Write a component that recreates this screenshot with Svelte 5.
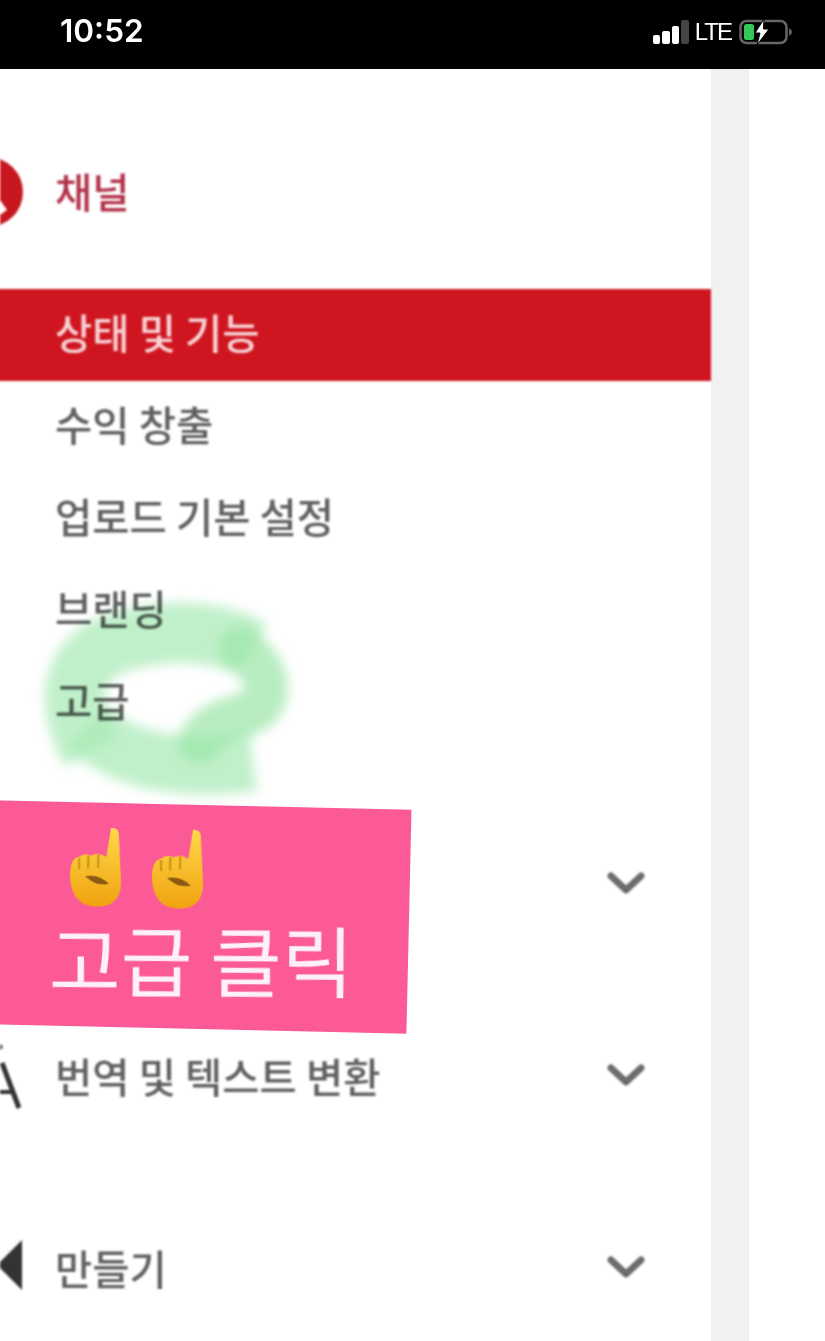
<script>
    const subItems = [
        {label: '상태 및 기능', active: true},
        {label: '수익 창출'},
        {label: '업로드 기본 설정'},
        {label: '브랜딩'},
        {label: '고급'}
    ];
</script>

<div class="screen">
    <header class="status">
        <span class="time">10:52</span>
        <div class="indicators">
            <div class="signal">
                <i class="b1"></i><i class="b2"></i><i class="b3"></i><i class="b4"></i>
            </div>
            <span class="lte">LTE</span>
            <svg class="battery" width="54" height="26" viewBox="0 0 54 26">
                <rect x="1.5" y="2" width="46" height="22" rx="6" fill="none" stroke="#666" stroke-width="2.5"/>
                <rect x="5" y="5" width="10" height="16" rx="2.5" fill="#34c759"/>
                <path d="M25 0 L16 14 H21 L18 26 L30 10 H24.5 Z" fill="#fff" stroke="#000" stroke-width="1"/>
                <path d="M50 9 Q53 11 53 13 Q53 15 50 17 Z" fill="#666"/>
            </svg>
        </div>
    </header>

    <div class="body">
        <nav class="sidebar">
            <div class="head channel">
                <span class="ic">
                    <svg width="56" height="80" viewBox="0 0 56 80">
                        <circle cx="-12" cy="42" r="35" fill="#c8161f"/>
                        <path d="M0 50 L7 60 L0 65 Z" fill="#fff"/>
                    </svg>
                </span>
                <span class="label">채널</span>
            </div>

            {#each subItems as item}
                <div class="sub" class:active={item.active}>{item.label}</div>
            {/each}

            <div class="head first">
                <span class="ic"></span>
                <span class="label"></span>
                <svg class="chev" width="40" height="26" viewBox="0 0 40 26"><path d="M5 6 L20 20 L35 6" /></svg>
            </div>
            <div class="head">
                <span class="ic">
                    <svg width="56" height="80" viewBox="0 0 56 80">
                        <circle cx="0" cy="12" r="2.5" fill="#444"/>
                        <path d="M2 28 L19 73" fill="none" stroke="#333" stroke-width="5"/>
                        <path d="M0 57 H13" stroke="#333" stroke-width="4"/>
                    </svg>
                </span>
                <span class="label">번역 및 텍스트 변환</span>
                <svg class="chev" width="40" height="26" viewBox="0 0 40 26"><path d="M5 6 L20 20 L35 6" /></svg>
            </div>
            <div class="head">
                <span class="ic">
                    <svg width="56" height="80" viewBox="0 0 56 80">
                        <path d="M22 13 V63 L-3 38 Z" fill="#333"/>
                    </svg>
                </span>
                <span class="label">만들기</span>
                <svg class="chev" width="40" height="26" viewBox="0 0 40 26"><path d="M5 6 L20 20 L35 6" /></svg>
            </div>
        </nav>
        <div class="scrollbar"></div>
        <div class="rest"></div>
    </div>

    <svg class="scribble" width="300" height="220" viewBox="0 0 300 220">
        <path d="M238 172 C180 180 110 176 72 136"
              fill="none" stroke="#a8eab6" stroke-width="58" opacity=".72"/>
        <path d="M76 162 C48 110 56 68 104 52 C150 38 205 40 236 60"
              fill="none" stroke="#a8eab6" stroke-width="60" opacity=".72"/>
        <path d="M226 58 C256 80 260 114 232 124 C215 130 195 132 185 152"
              fill="none" stroke="#9be6a9" stroke-width="44" stroke-linecap="round" opacity=".72"/>
    </svg>

    <div class="callout">
        <div class="hands">
            {#each [0, 1] as h}
                <svg width="56" height="82" viewBox="0 0 56 82">
                    <defs>
                        <linearGradient id="skin{h}" x1="0" y1="0" x2="0" y2="1">
                            <stop offset="0" stop-color="#ffd84a"/>
                            <stop offset="1" stop-color="#f0a30f"/>
                        </linearGradient>
                    </defs>
                    <path d="M41 1 Q49 0 49 8 L52 50 Q55 80 28 80 Q3 80 1 50 Q1 32 9 31 Q15 26 22 29 Q29 25 37 30 Z" fill="url(#skin{h})"/>
                    <path d="M10 32 V43 M19 29 V42 M29 28 V41" stroke="#d39a1c" stroke-width="2.5"/>
                    <path d="M16 50 Q30 47 40 57 Q29 59 22 54 Z" fill="#8a5a10"/>
                </svg>
            {/each}
        </div>
        <div class="callout-text">고급 클릭</div>
    </div>
</div>

<style>
    :global(body) {
        margin: 0;
        background: #fff;
    }

    .screen {
        position: relative;
        width: 825px;
        height: 1341px;
        overflow: hidden;
        font-family: "Noto Sans CJK KR", "Noto Sans", sans-serif;
    }

    .status {
        height: 69px;
        background: #000;
        color: #fff;
        display: flex;
        align-items: center;
        justify-content: space-between;
        padding: 0 32px 8px 60px;
        box-sizing: border-box;
    }

    .time {
        font-family: Inter, sans-serif;
        font-size: 31.5px;
        font-weight: 600;
    }

    .indicators {
        display: flex;
        align-items: center;
        gap: 6px;
        margin-top: 3px;
    }

    .signal {
        display: flex;
        align-items: flex-end;
        gap: 2px;
        height: 24px;
    }

    .signal i {
        width: 7.5px;
        background: #fff;
        border-radius: 2px;
    }

    .signal .b1 { height: 9px; }
    .signal .b2 { height: 13px; }
    .signal .b3 { height: 18px; }
    .signal .b4 { height: 24px; background: #444; }

    .lte {
        font-family: "Liberation Sans", sans-serif;
        font-size: 24px;
        letter-spacing: -2px;
        line-height: 24px;
        margin-right: 2px;
    }

    .body {
        display: flex;
        height: 1272px;
    }

    .sidebar {
        width: 715px;
        margin-left: -4px;
        padding-top: 25px;
        box-sizing: border-box;
        filter: blur(.9px);
        font-size: 40.5px;
        font-weight: 500;
        color: #5f5f5f;
    }

    .scrollbar {
        width: 38px;
        background: #f1f1f1;
    }

    .rest {
        flex: 1;
        background: #fff;
    }

    .head {
        height: 192px;
        display: flex;
        align-items: center;
    }

    .channel {
        margin-bottom: 3px;
        color: #b13048;
    }

    .first {
        margin-top: 38px;
    }

    .ic {
        width: 60px;
        height: 80px;
        flex-shrink: 0;
    }

    .ic svg {
        display: block;
        margin-left: 4px;
    }

    .label {
        flex: 1;
        margin-left: -1px;
    }

    .chev {
        margin-right: 65px;
    }

    .chev path {
        fill: none;
        stroke: #6c6c6c;
        stroke-width: 7;
        stroke-linecap: round;
        stroke-linejoin: round;
    }

    .sub {
        height: 92px;
        line-height: 86px;
        padding-left: 59px;
    }

    .sub.active {
        background: #cf1620;
        color: #f8d4d6;
    }

    .scribble {
        position: absolute;
        left: 15px;
        top: 590px;
        filter: blur(6px);
        mix-blend-mode: multiply;
    }

    .callout {
        position: absolute;
        left: -8px;
        top: 805px;
        width: 417px;
        height: 224px;
        padding: 24px 0 0 76px;
        box-sizing: border-box;
        background: #fb5a97;
        transform: rotate(1.3deg);
        filter: blur(.5px);
    }

    .hands {
        display: flex;
        gap: 26px;
        height: 84px;
    }

    .callout-text {
        margin: -6px 0 0 -18px;
        font-size: 78px;
        line-height: 100px;
        color: #fdf0f6;
        white-space: nowrap;
        transform: rotate(-1deg);
    }
</style>
